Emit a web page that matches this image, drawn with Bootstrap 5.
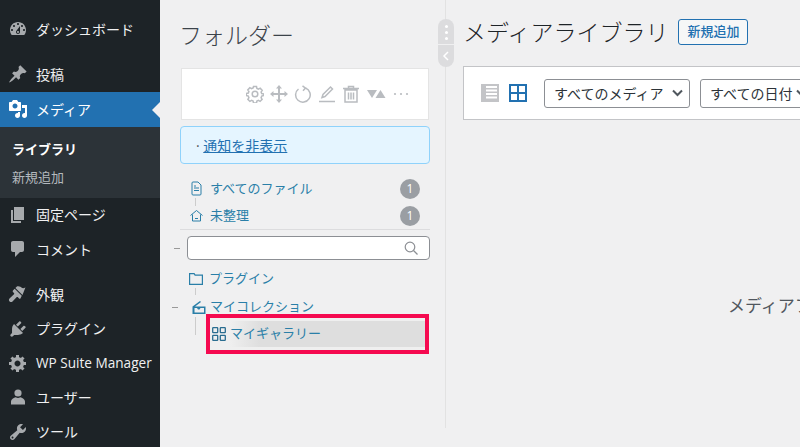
<!DOCTYPE html>
<html lang="ja"><head><meta charset="utf-8">
<link href="https://cdn.jsdelivr.net/npm/bootstrap@5.3.0/dist/css/bootstrap.min.css" rel="stylesheet">
<style>
html,body{width:800px;height:447px;overflow:hidden;margin:0}
body{background:#f0f0f1;font-family:"Open Sans","Noto Sans CJK JP",sans-serif;color:#3c434a;font-size:13px}
.side{width:160px;height:447px;background:#1d2327;flex:none;padding-top:12px}
.mi{height:34.3px;padding-left:8px;gap:8px;color:#f0f0f1;font-size:14px;position:relative;white-space:nowrap}
.mi svg{width:20px;height:20px;fill:#a7aaad;flex:none}
.mi.act{background:#2271b1;color:#fff;height:35px}
.mi.act svg{fill:#fff}
.mi.act::after{content:"";position:absolute;right:0;top:10px;border:8px solid transparent;border-right-color:#f0f0f1;border-left:0}
.gapm{height:11px}
.subm{background:#2c3338;height:71px;padding:8px 12px 0;color:#b4b9be;font-size:13px;line-height:28px}
.subm b{display:block;color:#fff;font-weight:700}
.wpsm{font-size:13.6px}
.fold{width:285px;flex:none;padding:0 16px 0 20px;position:relative}
.ftit{font-size:23px;font-weight:300;color:#3c434a;height:68px;line-height:71px;margin-left:-1px}
.tbox{height:52px;background:#fff;border:1px solid #e4e4e4;width:248px;margin-left:1px;padding:0 18px 0 0;gap:6px;margin-bottom:6px}
.tbox svg{height:18px;width:18px;stroke:#b9bcc0;fill:none;stroke-width:1.5}
.noti{height:38px;width:250px;background:#e5f5ff;border:1px solid #8fd2fb;border-radius:4px;padding-left:15px;color:#555;margin-bottom:11px;font-size:14px}
.noti a{color:#2271b1}
.rw{height:27px;color:#2a7fa8;position:relative;white-space:nowrap}
.rw svg{flex:none}
.cnt{width:20px;height:20px;border-radius:50%;background:#9a9ea3;color:#fff;font-size:12px;margin-left:auto;margin-right:9px}
.hr1{width:250px;border-top:1px solid #dcdcde;margin:0 0 6px 0}
.srch{height:24px;width:243px;margin-left:7px;background:#fff;border:1px solid #8c8f94;border-radius:4px;padding-right:11px}
.dash{position:absolute;left:-8px;top:50%;width:6px;border-top:1px solid #999}
.sel{height:29px;border:1px solid #8c8f94;border-radius:3px;background:#fff;color:#2c3338;font-size:14px;padding:0 6px 0 9px;white-space:nowrap;flex:none}
.hot{margin-left:26px;height:40px;width:223px;border:4px solid #f50a50;background:#efefef;font-size:13px;color:#2a7fa8;margin-top:-6px}
.hotin{height:26px;width:100%;padding-left:2px;gap:4px;background:linear-gradient(90deg,#efefef 20px,#dedede 50px)}
.tl{position:absolute;border-left:1px solid #ccc;width:0}
.mn{flex:1;min-width:0;position:relative;padding-left:17px;overflow:hidden;border-left:1px solid #e2e2e2;height:428px}
.mtit{font-size:23px;font-weight:300;color:#1d2327;white-space:nowrap;line-height:1.2;padding-top:3px}
.addb{font-size:13px;height:26px;width:70px;border:1px solid #2271b1;border-radius:3px;color:#2271b1;background:#f6f7f7;font-weight:500}
.filt{height:54px;width:400px;background:#fff;border:1px solid #c3c4c7;padding-left:17px;gap:0}
.empt{position:absolute;left:282px;top:293px;font-size:17px;color:#50575e;white-space:nowrap}
.hdl{position:absolute;left:438px;top:19px;width:16px;height:48px;background:#dcdcde;border-radius:8px;z-index:3;overflow:hidden}
.hdl i{display:block;width:3px;height:3px;border-radius:50%;background:#fff;margin:0 auto 3px}
.hdl .ln{border-top:1px solid #f0f0f1;margin-top:4px}
</style></head>
<body class="d-flex">
<aside class="side">
<div class="mi d-flex align-items-center"><svg viewBox="0 0 20 20"><path d="M3.76 16h12.48c1.1-1.37 1.76-3.11 1.76-5 0-4.42-3.58-8-8-8s-8 3.58-8 8c0 1.89.66 3.63 1.76 5zM10 4c.55 0 1 .45 1 1s-.45 1-1 1-1-.45-1-1 .45-1 1-1zM6 6c.55 0 1 .45 1 1s-.45 1-1 1-1-.45-1-1 .45-1 1-1zm8 0c.55 0 1 .45 1 1s-.45 1-1 1-1-.45-1-1 .45-1 1-1zm-5.37 5.55L12 7v6c0 1.1-.9 2-2 2s-2-.9-2-2c0-.57.24-1.08.63-1.45zM4 10c.55 0 1 .45 1 1s-.45 1-1 1-1-.45-1-1 .45-1 1-1zm12 0c.55 0 1 .45 1 1s-.45 1-1 1-1-.45-1-1 .45-1 1-1zm-5 3c0-.55-.45-1-1-1s-1 .45-1 1 .45 1 1 1 1-.45 1-1z"/></svg><span>ダッシュボード</span></div>
<div class="gapm"></div>
<div class="mi d-flex align-items-center"><svg viewBox="0 0 20 20"><path d="M10.44 3.02l1.82-1.82 6.36 6.35-1.83 1.82c-1.05-.68-2.48-.57-3.41.36l-.75.75c-.92.93-1.04 2.35-.35 3.41l-1.83 1.82-2.41-2.41-2.8 2.79c-.42.42-3.38 2.71-3.8 2.29s1.86-3.39 2.28-3.81l2.79-2.79L4.1 9.36l1.83-1.82c1.05.69 2.48.57 3.4-.36l.75-.75c.93-.92 1.05-2.35.36-3.41z"/></svg><span>投稿</span></div>
<div class="mi act d-flex align-items-center"><svg viewBox="0 0 20 20"><path d="M13 11V4c0-.55-.45-1-1-1h-1.67L9 1H5L3.67 3H2c-.55 0-1 .45-1 1v7c0 .55.45 1 1 1h10c.55 0 1-.45 1-1zM7 4.5c1.38 0 2.5 1.12 2.5 2.5S8.38 9.5 7 9.500 4.500 8.380 4.500 7 5.620 4.500 7 4.500zM14 6h5v10.500c0 1.380-1.120 2.500-2.500 2.500S14 17.880 14 16.500s1.120-2.500 2.500-2.500c.17 0 .34.02.5.05V9h-3V6zm-4 8.050V13h2v3.500c0 1.380-1.120 2.500-2.500 2.500S7 17.880 7 16.500 8.120 14 9.500 14c.17 0 .34.02.5.05z"/></svg><span>メディア</span></div>
<div class="subm"><b>ライブラリ</b>新規追加</div>
<div class="mi d-flex align-items-center"><svg viewBox="0 0 20 20"><path d="M6 15V2h10v13H6zm-1 1h8v2H3V5h2v11z"/></svg><span>固定ページ</span></div>
<div class="mi d-flex align-items-center"><svg viewBox="0 0 20 20"><path d="M5 2h9c1.1 0 2 .9 2 2v7c0 1.1-.9 2-2 2h-2l-5 5v-5H5c-1.1 0-2-.9-2-2V4c0-1.1.9-2 2-2z"/></svg><span>コメント</span></div>
<div class="gapm"></div>
<div class="mi d-flex align-items-center"><svg viewBox="0 0 20 20"><path d="M14.48 11.06L7.41 3.99l1.5-1.5c.5-.56 2.3-.47 3.51.32 1.21.8 1.43 1.28 2.66 1.34 1.18.07 2.43-.97 2.43-.97l-3.03 7.880zm-.71.71L6.7 4.7 4.930 6.470c-.39.39-.39 1.020 0 1.410l1.060 1.060c.39.39.39 1.030 0 1.420L1.500 14.500c-.8.8-.8 2.200.1 3s2.100.8 2.900 0l4.050-4.150c.39-.39 1.030-.39 1.420 0l1.060 1.060c.39.39 1.020.39 1.410 0z"/></svg><span>外観</span></div>
<div class="mi d-flex align-items-center"><svg viewBox="0 0 20 20"><path d="M13.11 4.36L9.87 7.6 8 5.73l3.24-3.24c.35-.34 1.050-.2 1.560.31.52.51.66 1.210.31 1.560zm-8 1.770l.91-1.120 9.010 9.010-1.190.84c-.71.71-2.630 1.160-3.820 1.160H6.140L4.900 17.260c-.59.59-1.540.59-2.120 0-.59-.58-.59-1.530 0-2.120l1.240-1.240v-3.880c0-1.130.35-3.050 1.090-3.890zm7.260 3.970l3.240-3.240c.35-.34 1.050-.2 1.560.31.51.51.66 1.210.31 1.560l-3.240 3.250z"/></svg><span>プラグイン</span></div>
<div class="mi d-flex align-items-center"><svg viewBox="0 0 20 20"><path d="M18 12h-2.180c-.17.7-.44 1.350-.81 1.930l1.540 1.540-2.100 2.100-1.540-1.540c-.58.36-1.230.64-1.910.81V19H8v-2.180c-.68-.17-1.330-.45-1.910-.81l-1.540 1.540-2.120-2.120 1.540-1.540c-.36-.58-.64-1.230-.81-1.910H1V9h2.180c.17-.7.45-1.350.81-1.940L2.430 5.520l2.100-2.100 1.540 1.540c.58-.37 1.240-.64 1.930-.81V2h3v2.180c.68.17 1.330.45 1.910.81l1.540-1.540 2.120 2.120-1.540 1.540c.36.59.64 1.240.81 1.910H18v3zm-8.500 1.500c1.660 0 3-1.340 3-3s-1.340-3-3-3-3 1.340-3 3 1.340 3 3 3z"/></svg><span class="wpsm">WP Suite Manager</span></div>
<div class="mi d-flex align-items-center"><svg viewBox="0 0 20 20"><circle cx="10" cy="6" r="3.600"/><path d="M3 17.500v-3c0-2.300 2.700-3.700 4.800-4.200.6.500 1.300.8 2.200.8s1.600-.3 2.200-.8c2.100.5 4.800 1.900 4.800 4.200v3z"/></svg><span>ユーザー</span></div>
<div class="mi d-flex align-items-center"><svg viewBox="0 0 20 20"><path d="M16.68 9.77c-1.34 1.34-3.3 1.67-4.95.99l-5.410 6.520c-.99.99-2.590.99-3.570 0-.99-.98-.99-2.580 0-3.570l6.520-5.420c-.68-1.650-.35-3.610.99-4.950 1.280-1.280 3.120-1.620 4.720-1.060l-2.890 2.890 2.820 2.820 2.890-2.870c.53 1.580.18 3.420-1.120 4.650zM3.810 16.210c.4.39 1.030.39 1.420 0 .4-.4.4-1.030 0-1.420-.39-.4-1.020-.4-1.420 0-.39.39-.39 1.020 0 1.420z"/></svg><span>ツール</span></div>
</aside>

<section class="fold">
<div class="ftit">フォルダー</div>
<div class="tbox d-flex align-items-center justify-content-end">
<svg viewBox="0 0 18 18"><circle cx="9" cy="9" r="2.800"/><path d="M7.500 1.500h3l.4 2 1.500.7 1.800-1 2 2.200-1.100 1.700.6 1.500 2 .4v1.500l-2 .6-.6 1.500 1 1.700-2 2.100-1.700-1-1.500.6-.4 2h-3l-.4-2-1.500-.6-1.700 1-2-2.100 1-1.700-.6-1.500-2-.6V8.500l2-.4.6-1.500-1.100-1.700 2-2.200 1.800 1 1.500-.7z"/></svg>
<svg viewBox="0 0 18 18" style="fill:#b9bcc0;stroke:none"><path d="M9 0l3 3.500h-2v4.500h4.500V6L18 9l-3.500 3v-2H10v4.500h2L9 18l-3-3.500h2V10H3.500v2L0 9l3.500-3v2H8V3.500H6z"/></svg>
<svg viewBox="0 0 18 18"><path d="M11.500 3A7.300 7.300 0 1 1 4.500 4"/><path d="M8.500.8l3 2.300-2.500 2.700"/></svg>
<svg viewBox="0 0 18 18"><path d="M4 12.500l1-3 7.500-7.500 2 2L7 11.500zM1 16.500h16"/></svg>
<svg viewBox="0 0 18 18"><path d="M3 5h12v12H3zM1 3.500h16M6.500 3.500V1.500h5v2M6.500 7.500v7M9 7.500v7M11.500 7.500v7"/></svg>
<svg viewBox="0 0 18 18" style="fill:#b9bcc0;stroke:none;width:20px"><path d="M0 5h10l-5 8zM8.500 13l5-8 5 8z"/></svg>
<svg viewBox="0 0 18 18" style="fill:#b9bcc0;stroke:none"><circle cx="3" cy="9" r="1.100"/><circle cx="9" cy="9" r="1.100"/><circle cx="15" cy="9" r="1.100"/></svg>
</div>
<div class="noti d-flex align-items-center"><span>·&nbsp;<a href="#">通知を非表示</a></span></div>
<div class="rw d-flex align-items-center" style="padding-left:10px;gap:7px"><svg width="13" height="15" viewBox="0 0 13 15" fill="none" stroke="#2a7fa8"><path d="M3 1h5l3 3v9a1 1 0 0 1-1 1H3a1 1 0 0 1-1-1V2a1 1 0 0 1 1-1zM4 7h5M4 9.500h5M4 5h2"/></svg><span>すべてのファイル</span><span class="cnt d-flex align-items-center justify-content-center">1</span></div>
<div class="rw d-flex align-items-center" style="padding-left:10px;gap:7px"><svg width="13" height="13" viewBox="0 0 13 13" fill="none" stroke="#2a7fa8"><path d="M.5 6.500l6-5 6 5M2.500 5.500v6.500h8V5.500M5 9.500h3"/></svg><span>未整理</span><span class="cnt d-flex align-items-center justify-content-center">1</span></div>
<div class="hr1"></div>
<div class="srch d-flex align-items-center justify-content-end position-relative"><i class="dash" style="left:-14px"></i><svg width="14" height="14" viewBox="0 0 14 14" fill="none" stroke="#8c8f94" stroke-width="1.200"><circle cx="6" cy="6" r="4.800"/><path d="M9.500 9.500l4 4"/></svg></div>
<div class="rw d-flex align-items-center mt-1" style="padding-left:9px;gap:6px;height:30px"><svg width="14" height="12" viewBox="0 0 14 12" fill="none" stroke="#2a7fa8" stroke-width="1.200"><path d="M.6.600h4.500l1 1.500h7.300v9.300H.6z"/></svg><span>プラグイン</span></div>
<div class="rw d-flex align-items-center" style="padding-left:12px;gap:4px;height:26px"><i class="dash" style="left:-8px"></i><svg width="14" height="13" viewBox="0 0 14 13" fill="#2a7fa8"><path d="M.5 5.500L8 0l1 1-6 4.500h10.500V13H.5zm2 1.500v4.500h9.500V7H8.500l-1 1.500H6L5 7z" fill-rule="evenodd"/></svg><span>マイコレクション</span></div>
<div class="hot d-flex align-items-center"><div class="hotin d-flex align-items-center"><svg width="14" height="14" viewBox="0 0 14 14" fill="none" stroke="#2a6d90" stroke-width="1.300"><rect x=".7" y=".7" width="5" height="5" rx=".6"/><rect x="8.300" y=".7" width="5" height="5" rx=".6"/><rect x=".7" y="8.300" width="5" height="5" rx=".6"/><rect x="8.300" y="8.300" width="5" height="5" rx=".6"/></svg><span>マイギャラリー</span></div></div>
<i class="tl" style="left:35px;top:198px;height:8px"></i>
<i class="tl" style="left:35px;top:288px;height:7px"></i>
<i class="tl" style="left:35px;top:317px;height:18px"></i>
</section>

<main class="mn">
<div class="d-flex align-items-center" style="height:66px;gap:10px;padding-bottom:3px"><span class="mtit">メディアライブラリ</span><span class="addb d-flex align-items-center justify-content-center">新規追加</span></div>
<div class="filt d-flex align-items-center">
<svg width="18" height="18" viewBox="0 0 18 18" fill="#c3c4c7" class="flex-none"><path fill-rule="evenodd" d="M0 0h18v18H0zm5 2v2h11V2zm0 3.500v2h11v-2zm0 3.500v2h11V9zm0 3.500v2h11v-2z"/></svg>
<svg width="18" height="18" viewBox="0 0 18 18" fill="#2271b1" style="margin-left:10px;flex:none"><path fill-rule="evenodd" d="M0 0h18v18H0zm2 2v6h6V2zm8 0v6h6V2zM2 10v6h6v-6zm8 0v6h6v-6z"/></svg>
<span class="sel d-flex align-items-center" style="margin-left:17px;width:146px">すべてのメディア<svg class="ms-auto" width="11" height="8" viewBox="0 0 11 8" fill="none" stroke="#50575e" stroke-width="2"><path d="M1 1.500l4.500 4.500 4.500-4.500"/></svg></span>
<span class="sel d-flex align-items-center" style="margin-left:10px;width:130px;gap:4px">すべての日付<svg width="11" height="8" viewBox="0 0 11 8" fill="none" stroke="#50575e" stroke-width="2"><path d="M1 1.500l4.500 4.500 4.500-4.500"/></svg></span>
</div>
<div class="empt">メディアファイルが見つかりませんでした。</div>
</main>
<div class="hdl"><div style="height:6px"></div><i></i><i></i><i></i><div class="ln"></div><svg width="16" height="16" viewBox="0 0 16 16" fill="none" stroke="#fff" stroke-width="1.500"><path d="M10 4l-4 4 4 4"/></svg></div>
</body></html>
